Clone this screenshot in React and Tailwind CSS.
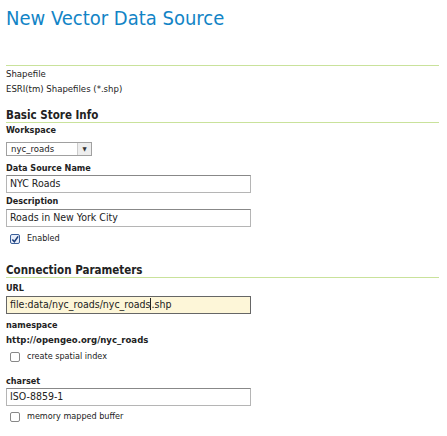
import React from 'react';

const font = { fontFamily: '"DejaVu Sans Condensed", "DejaVu Sans", Verdana, sans-serif' };

function Label({ children, className = '' }) {
  return <div className={`h-[12px] text-[9px] font-bold leading-[12px] text-[#222] ${className}`}>{children}</div>;
}

function TextInput({ value, highlight, className = '' }) {
  return (
    <div
      className={`flex h-[18px] w-[245px] items-center border px-[3px] text-[10.5px] text-[#222] ${
        highlight ? 'border-[#666] bg-[#fdf6d8]' : 'border-[#b5b5b5] border-t-[#888] bg-white'
      } ${className}`}
    >
      {value}
    </div>
  );
}

function Check({ checked, label, className = '' }) {
  return (
    <div className={`flex h-[12px] items-center gap-[7px] pl-[4px] text-[9px] text-[#222] ${className}`}>
      <span
        className={`flex h-[10px] w-[10px] items-center justify-center rounded-[2px] border ${
          checked ? 'border-[#3a5f9a] bg-[#e8eefa]' : 'border-[#888] bg-white'
        }`}
      >
        {checked && (
          <svg width="9" height="9" viewBox="0 0 9 9">
            <path d="M1.5 4.5 L3.8 7 L8 1" fill="none" stroke="#1e3f7a" strokeWidth="1.8" />
          </svg>
        )}
      </span>
      {label}
    </div>
  );
}

function Section({ title, className = '' }) {
  return (
    <div className={`border-b border-[#c9e29b] text-[11.5px] font-bold leading-[14px] text-[#222] ${className}`}>
      {title}
    </div>
  );
}

export default function App() {
  return (
    <div className="h-[436px] w-[447px] overflow-hidden bg-white pl-[6px] pr-[8px]" style={font}>
      <h1 className="pt-[5px] text-[20px] leading-[26px] text-[#1284c6]">New Vector Data Source</h1>

      <div className="mt-[34px] border-t border-[#c9e29b] text-[9.5px] leading-[15px] text-[#222]">
        <div>Shapefile</div>
        <div>ESRI(tm) Shapefiles (*.shp)</div>
      </div>

      <Section title="Basic Store Info" className="mt-[12px]" />
      <Label className="mt-[1px]">Workspace</Label>
      <div className="mt-[6px] flex h-[14px] w-[86px] items-center justify-between border border-[#a0a0a0] bg-white pl-[4px] text-[9.5px] leading-none text-[#222]">
        <span>nyc_roads</span>
        <span className="flex h-full w-[14px] items-center justify-center border-l border-[#ccc] bg-[#eeeeee] text-[6px] text-[#333]">▼</span>
      </div>
      <Label className="mt-[6px]">Data Source Name</Label>
      <TextInput value="NYC Roads" className="mt-[1px]" />
      <Label className="mt-[2px]">Description</Label>
      <TextInput value="Roads in New York City" className="mt-[2px]" />
      <Check checked label="Enabled" className="mt-[6px]" />

      <Section title="Connection Parameters" className="mt-[18px]" />
      <Label className="mt-[4px]">URL</Label>
      <TextInput
        highlight
        className="mt-[2px]"
        value={
          <span>
            file:data/nyc_roads/nyc_roads<span className="border-l border-[#222]">.shp</span>
          </span>
        }
      />
      <Label className="mt-[5px]">namespace</Label>
      <div className="mt-[3px] h-[12px] text-[9.5px] font-bold leading-[12px] text-[#222]">http://opengeo.org/nyc_roads</div>
      <Check label="create spatial index" className="mt-[5px]" />
      <Label className="mt-[12px]">charset</Label>
      <TextInput value="ISO-8859-1" className="mt-[1px]" />
      <Check label="memory mapped buffer" className="mt-[5px]" />
    </div>
  );
}
